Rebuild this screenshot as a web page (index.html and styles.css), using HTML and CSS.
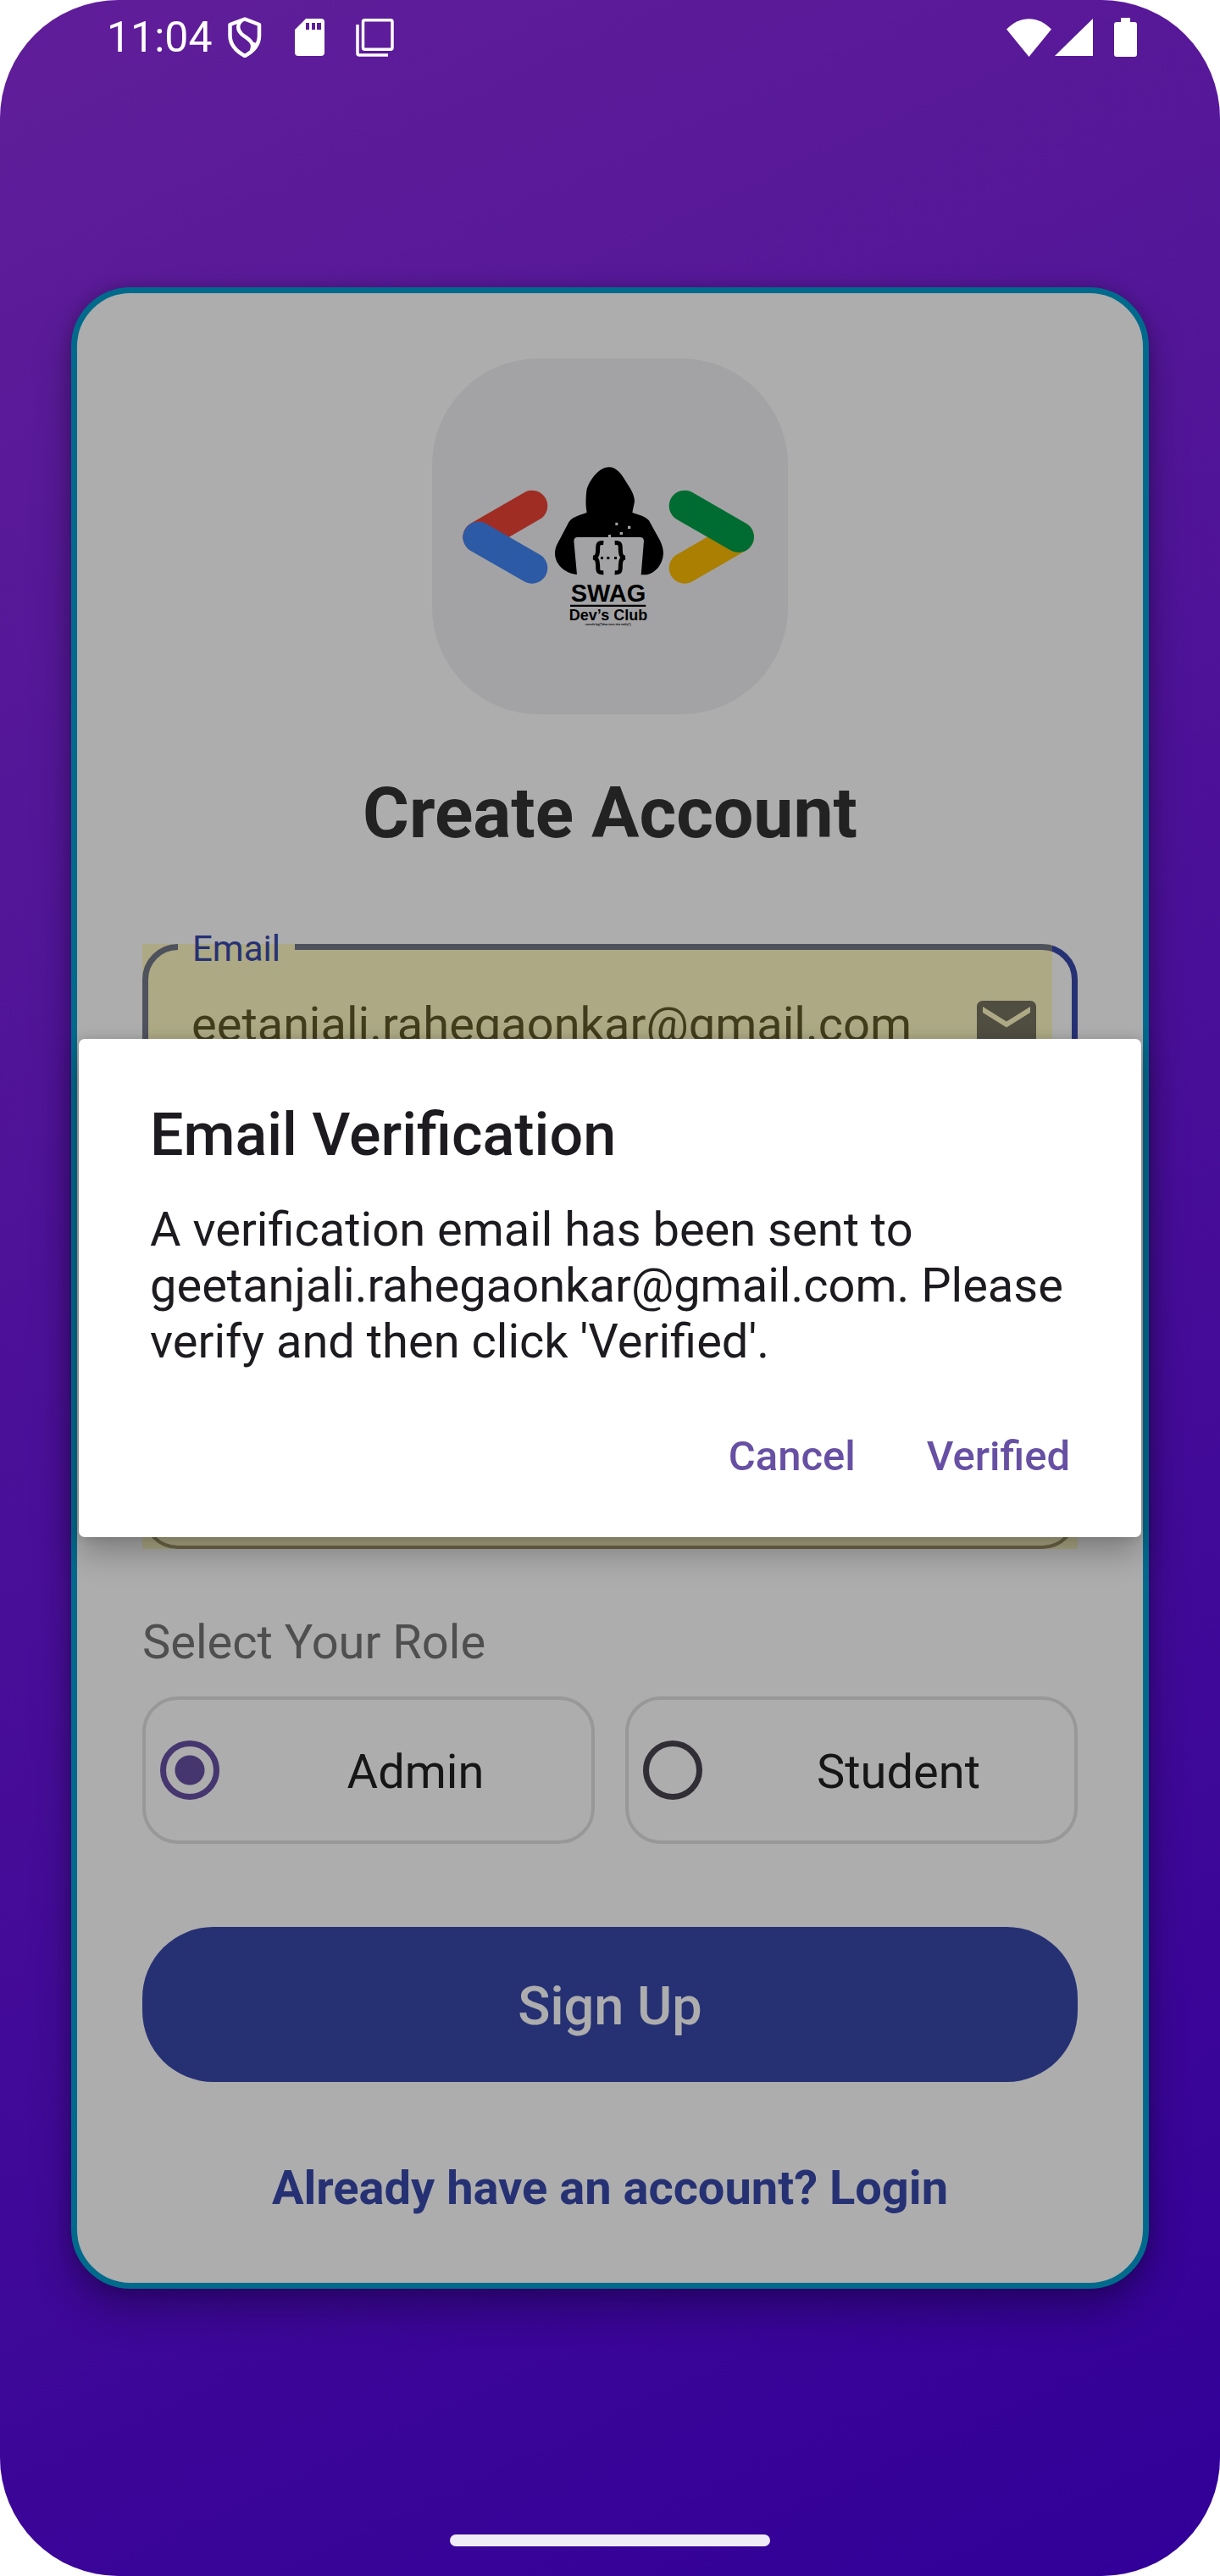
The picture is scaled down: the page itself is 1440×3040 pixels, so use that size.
FILE: index.html
```html
<!DOCTYPE html>
<html lang="en">
<head>
<meta charset="utf-8">
<title>Create Account</title>
<link rel="stylesheet" href="styles.css">
</head>
<body>
<div class="screen">
  <header class="status-bar">
    <span class="clock">11:04</span>
    <svg class="icon-shield" viewBox="0 0 40 48" fill="none" stroke="#fff" stroke-width="4.500" stroke-linejoin="round"><path d="M20 2.500 37 9V22C37 32 31 40 20 46 9 40 2.500 32 2.500 22V9Z"/><path d="M16 4C11 9 11 15 16 20 20 24 28 27 29 33 29.500 35 29 37 28 40M31 30 28 40"/></svg>
    <svg class="icon-card" viewBox="0 0 35 44"><path fill="#fff" fill-rule="evenodd" d="M13 0H31Q35 0 35 4V40Q35 44 31 44H4Q0 44 0 40V13ZM13 5V13H17V5ZM20 5V13H24V5ZM26 5V13H31V5Z"/></svg>
    <svg class="icon-copy" viewBox="0 0 45 45" fill="none" stroke="#fff" stroke-width="3.500"><rect x="8.500" y="1.750" width="34.500" height="34.500" rx="2"/><path d="M2 7V41Q2 43 4 43H38"/></svg>
    <span class="status-fill"></span>
    <svg class="icon-wifi" viewBox="0 0 53 45"><path fill="#fff" d="M0 12.500C16 -4 37 -4 53 12.500L26.500 45Z"/></svg>
    <svg class="icon-signal" viewBox="0 0 45 44"><path fill="#fff" d="M45 0V44H0Z"/></svg>
    <svg class="icon-battery" viewBox="0 0 27 46"><path fill="#fff" d="M8 0H19V5H24Q27 5 27 8V43Q27 46 24 46H3Q0 46 0 43V8Q0 5 3 5H8Z"/></svg>
  </header>

  <main class="card">
    <svg class="logo" viewBox="0 0 420 420" role="img" aria-label="SWAG Dev's Club">
      <g transform="translate(-10 77) scale(.33333)">
        <g stroke-width="110" stroke-linecap="round">
          <path stroke="#ea4335" d="M384 291 194 401"/>
          <path stroke="#4285f4" d="M194 402 384 511"/>
          <path stroke="#fbbc04" d="M924 511 1115 401"/>
          <path stroke="#00a04b" d="M924 291 1115 401"/>
        </g>
        <path d="M656 154C683 154 700 178 714 201 732 229 747 250 747 276L739 314C760 323 780 324 798 343L829 399C841 419 849 438 849 460 847 500 819 530 790 535H770L780 415Q779 402 767 402H663V393H654V402H545Q533 402 532 415L543 534C510 531 465 505 465 458 466 434 477 420 486 402L514 349C527 327 555 325 578 314 573 290 574 265 577 237 583 208 617 154 656 154Z"/>
        <path fill="#f1f1f4" d="M679 350h9v10h-9zM723 362h10v10h-10zM695 384h10v9h-10z"/>
        <path fill="none" stroke="#000" stroke-width="15" d="M637 422C616 420 617 429 617 445 617 463 614 474 600 474 614 475 617 486 617 502 617 520 616 528 637 527M677 422C698 420 697 429 697 445 697 463 700 474 714 474 700 475 697 486 697 502 697 520 698 528 677 527"/>
        <path d="M627 471h9v9h-9zM649 471h9v9h-9zM675 471h9v9h-9z"/>
        <path d="M519 641H787V648H519Z"/>
      </g>
      <g font-family="Liberation Sans, Arial, sans-serif" font-weight="700" text-anchor="middle">
        <text x="208" y="287" font-size="29">SWAG</text>
        <text x="208" y="309" font-size="18">Dev’s Club</text>
        <text x="208" y="315" font-size="3">console.log("Ideas turns into reality");</text>
      </g>
    </svg>
    <h1 class="title">Create Account</h1>

    <form class="form">
      <div class="fields">
        <fieldset class="field field-focused">
          <legend><label for="email">Email</label></legend>
          <input id="email" type="text" value="eetanjali.rahegaonkar@gmail.com">
          <svg class="icon-mail" viewBox="2 4 20 16"><path fill="#3d3f71" d="M20 4H4c-1.100 0-2 .9-2 2v12c0 1.100.9 2 2 2h16c1.100 0 2-.9 2-2V6c0-1.100-.9-2-2-2zm0 4-8 5-8-5V6l8 5 8-5z"/></svg>
        </fieldset>
        <div class="field"><input type="password" aria-label="Password"></div>
        <div class="field"><input type="password" aria-label="Confirm password"></div>
      </div>

      <p class="role-title" id="role-title">Select Your Role</p>
      <div class="roles" role="radiogroup" aria-labelledby="role-title">
        <label class="role"><input type="radio" name="role" checked><span>Admin</span></label>
        <label class="role"><input type="radio" name="role"><span>Student</span></label>
      </div>
      <button class="submit" type="button">Sign Up</button>
    </form>
    <a class="login" href="#">Already have an account? Login</a>
  </main>

  <div class="scrim">
    <section class="dialog" role="dialog" aria-labelledby="dialog-title">
      <h2 id="dialog-title">Email Verification</h2>
      <p>A verification email has been sent to geetanjali.rahegaonkar@gmail.com. Please verify and then click 'Verified'.</p>
      <div class="actions">
        <button type="button">Cancel</button>
        <button type="button">Verified</button>
      </div>
    </section>
  </div>
  <div class="home-bar"></div>
</div>
</body>
</html>
```

FILE: styles.css
```css
* { box-sizing: border-box; }

body {
  margin: 0;
  background: #fff;
  font-family: Roboto, "Liberation Sans", sans-serif;
  font-size: 56px;
  line-height: 66px;
  color: #1d1b20;
}

h1, h2, p { margin: 0; }
input, button { font: inherit; }

.screen {
  position: relative;
  display: flex;
  flex-direction: column;
  min-height: 100vh;
  overflow: hidden;
  border-radius: 140px;
  background: linear-gradient(155deg, #8e2de2, #4a00e0);
}

/* Status bar and home bar sit above the scrim */
.status-bar {
  position: relative;
  z-index: 2;
  display: flex;
  align-items: center;
  height: 88px;
  padding: 0 98px 0 126px;
  color: #fff;
  font-size: 50px;
}
.clock { width: 143px; }
.status-fill { flex: 1; }
.icon-shield { width: 40px; height: 48px; }
.icon-card { width: 35px; height: 44px; margin-left: 39px; }
.icon-copy { width: 45px; height: 45px; margin-left: 37px; }
.icon-wifi { width: 53px; height: 45px; }
.icon-signal { width: 45px; height: 44px; margin-left: 4px; }
.icon-battery { width: 27px; height: 46px; margin-left: 25px; }

.card {
  display: flex;
  flex-direction: column;
  align-items: center;
  margin: 251px 84px 0;
  padding: 77px 77px 79px;
  border: 7px solid #009ccf;
  border-radius: 70px;
  background: #fff;
  box-shadow: 0 24px 48px rgba(0, 0, 0, .3), 0 0 18px rgba(0, 0, 0, .2);
}

.logo {
  width: 420px;
  height: 420px;
  border-radius: 126px;
  background: #f1f1f4;
}

.title {
  margin: 67px 0 104px;
  font-size: 84px;
  line-height: 100px;
  color: #333;
}

.form { width: 100%; }
.fields { display: grid; gap: 75px; }

.field {
  position: relative;
  height: 188px;
  margin: 0;
  padding: 0 45px 0 52px;
  border: 4px solid #79747e;
  border-radius: 42px;
}
/* Autofill highlight */
.field::after {
  content: "";
  position: absolute;
  inset: -4px;
  background: rgba(255, 235, 59, .3);
  pointer-events: none;
}
.field input {
  flex: 1;
  width: 100%;
  min-width: 0;
  height: 180px;
  padding: 0;
  border: 0;
  outline: 0;
  background: none;
  color: inherit;
}

.field-focused {
  display: flex;
  align-items: center;
  height: 218px;
  margin-top: -30px;
  padding: 0 42px 28px 35px;
  border: 7px solid #3949ab;
}
.field-focused legend {
  position: relative;
  z-index: 1;
  height: 66px;
  padding: 3px 17px 0;
  font-size: 42px;
  color: #3949ab;
}
.field-focused input { padding-left: 16px; }
.field-focused::after { inset: -36px 23px -7px -7px; }
.icon-mail { flex: none; width: 70px; height: 56px; }

.role-title {
  margin: 77px 0 31px;
  color: #757575;
}

.roles {
  display: grid;
  grid-template-columns: 1fr 1fr;
  gap: 36px;
}
.role {
  display: flex;
  align-items: center;
  height: 174px;
  padding-left: 17px;
  border: 4px solid #e0e0e0;
  border-radius: 42px;
  color: #212121;
}
.role span { flex: 1; margin-left: 24px; padding-top: 4px; text-align: center; }
.role input {
  appearance: none;
  width: 70px;
  height: 70px;
  margin: 0;
  border: 7px solid #49454f;
  border-radius: 50%;
}
.role input:checked {
  border-color: #6750a4;
  background: radial-gradient(circle, #6750a4 17px, transparent 18px);
}

.submit {
  width: 100%;
  height: 183px;
  margin-top: 98px;
  padding: 4px 0 0;
  border: 0;
  border-radius: 84px;
  background: #3949ab;
  color: #fff;
  font-size: 63px;
  font-weight: 500;
}

.login {
  margin-top: 92px;
  color: #3949ab;
  font-weight: 700;
  text-decoration: none;
}

.scrim {
  position: absolute;
  inset: 0;
  z-index: 1;
  display: grid;
  align-items: center;
  padding: 0 93px;
  background: rgba(0, 0, 0, .32);
}
.dialog {
  padding: 72px 84px 46px;
  border-radius: 7px;
  background: #fff;
  box-shadow: 0 20px 36px rgba(0, 0, 0, .25), 0 0 12px rgba(0, 0, 0, .15);
}
.dialog h2 {
  font-size: 70px;
  font-weight: 500;
  line-height: 82px;
}
.dialog p { margin-top: 38px; }
.actions {
  display: flex;
  justify-content: flex-end;
  gap: 84px;
  margin-top: 54px;
}
.actions button {
  height: 98px;
  padding: 0;
  border: 0;
  background: none;
  color: #6750a4;
  font-size: 49px;
  font-weight: 500;
}

.home-bar {
  position: relative;
  z-index: 2;
  align-self: center;
  width: 378px;
  height: 14px;
  margin: auto 0 35px;
  border-radius: 7px;
  background: #efebf7;
}
```
